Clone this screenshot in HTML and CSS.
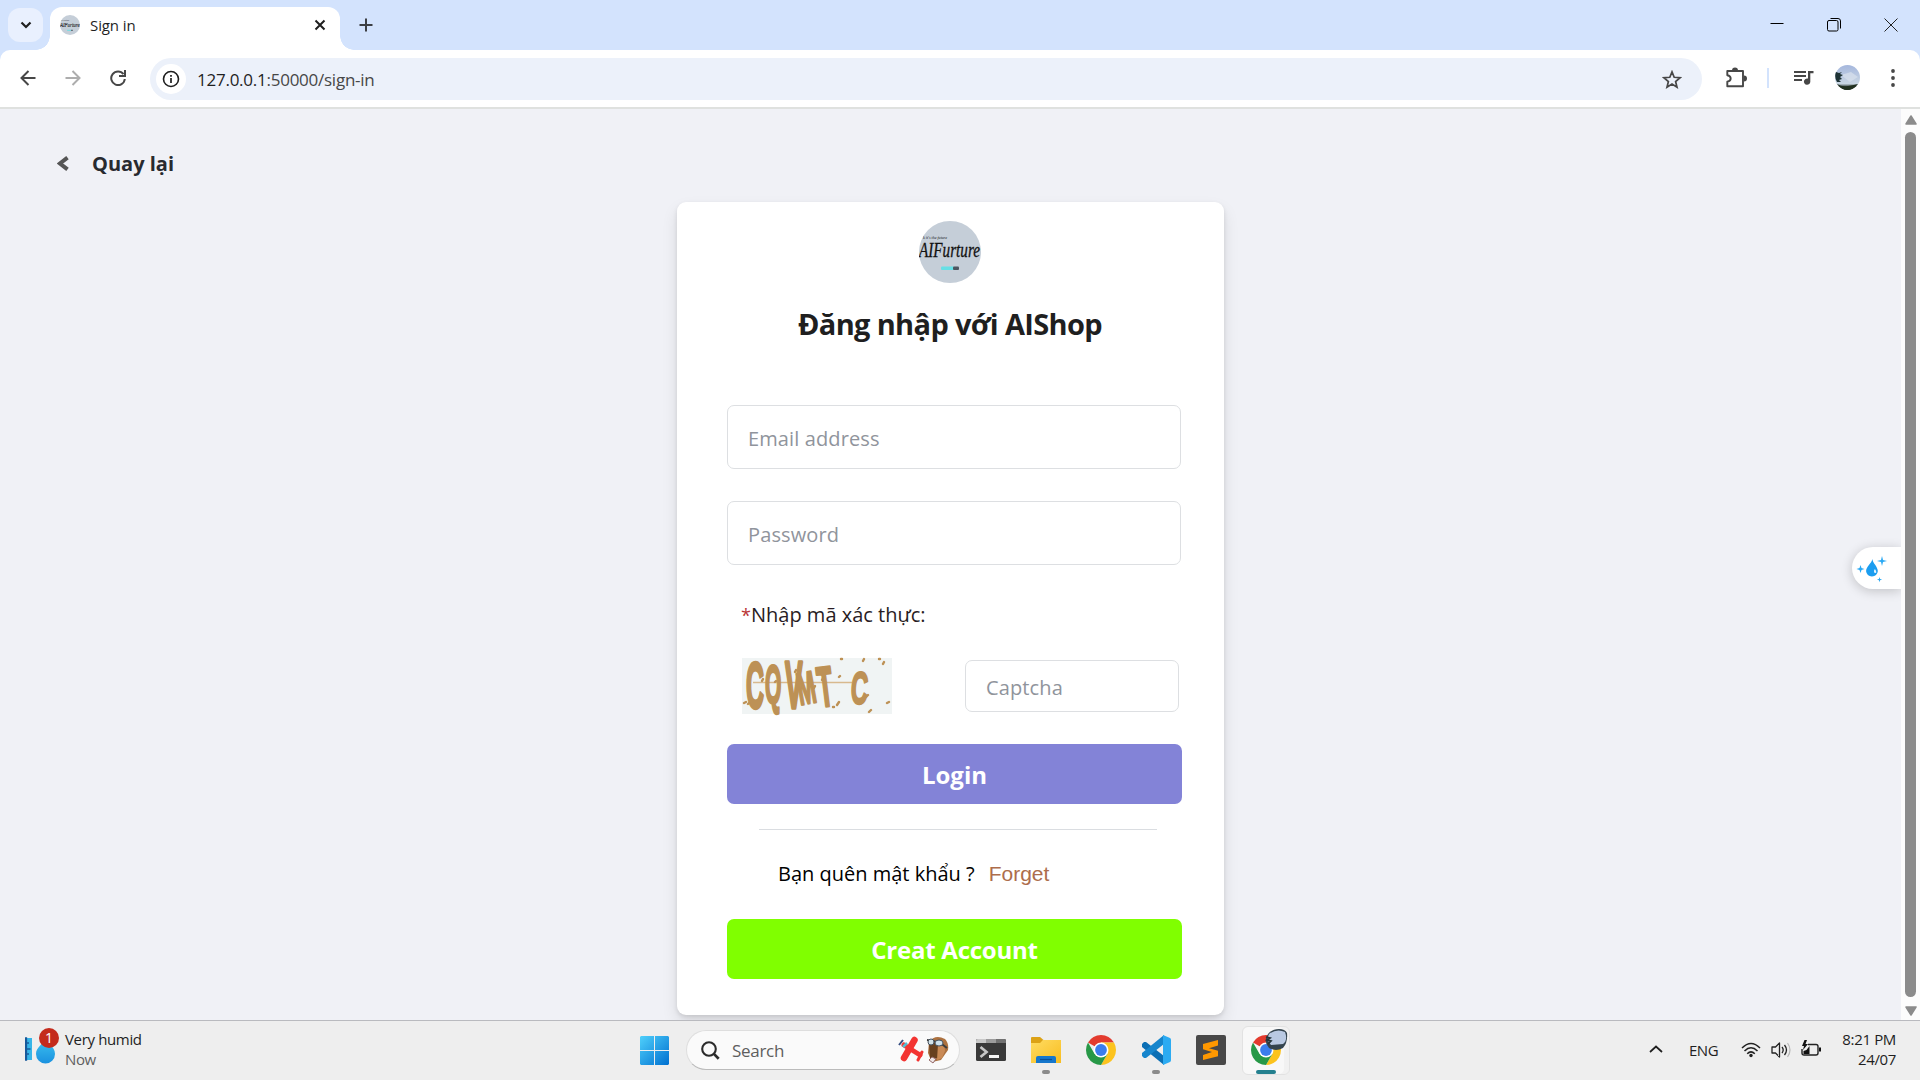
FILE: index.html
```html
<!DOCTYPE html>
<html lang="vi">
<head>
<meta charset="utf-8">
<title>Sign in</title>
<link rel="stylesheet" href="styles.css">
</head>
<body>
<svg class="defs" width="0" height="0">
  <defs>
    <symbol id="brand" viewBox="0 0 62 62">
      <circle cx="31" cy="31" r="31" fill="#c5ced8"/>
      <text x="4" y="18" class="brand-small" textLength="24" lengthAdjust="spacingAndGlyphs">k it's the future</text>
      <text x="0" y="36" class="brand-name" textLength="61" lengthAdjust="spacingAndGlyphs">AIFurture</text>
      <rect x="22" y="45.500" width="13" height="3.500" rx="1" fill="#67dfe5"/>
      <rect x="34" y="45.500" width="6" height="3.500" rx="1" fill="#4d5560"/>
    </symbol>
    <symbol id="chrome" viewBox="0 0 30 30">
      <path d="M15 15 2.010 7.500A15 15 0 0 1 27.990 7.500L15 7.500Z" fill="#e33b2e"/>
      <path d="M15 7.500H27.990A15 15 0 0 1 15 30L21.500 18.750Z" fill="#fcc31e"/>
      <path d="M2.010 7.500A15 15 0 0 0 15 30L21.500 18.750 15 15 8.500 18.750Z" fill="#279847"/>
      <circle cx="15" cy="15" r="7.500" fill="#fff"/>
      <circle cx="15" cy="15" r="5.900" fill="#3b7ded"/>
    </symbol>
    <linearGradient id="win" x1="0" y1="0" x2="1" y2="1"><stop offset="0" stop-color="#4fd0fb"/><stop offset="1" stop-color="#0070d0"/></linearGradient>
    <linearGradient id="drop" x1="0" y1="0" x2="0" y2="1"><stop offset="0" stop-color="#3fc4f0"/><stop offset="1" stop-color="#1a91df"/></linearGradient>
    <linearGradient id="folder" x1="0" y1="0" x2="1" y2="1"><stop offset="0" stop-color="#ffdc62"/><stop offset="1" stop-color="#f8bd20"/></linearGradient>
    <linearGradient id="sky" x1="0" y1="0" x2="0" y2="1"><stop offset="0" stop-color="#a5b7dd"/><stop offset=".75" stop-color="#c9d6e3"/><stop offset=".88" stop-color="#26332b"/></linearGradient>
  </defs>
</svg>

<header class="tabstrip">
  <div class="tab-search"><svg width="12" height="8" viewBox="0 0 12 8"><path d="M1.500 1.500 6 6l4.500-4.500" fill="none" stroke="#1f1f1f" stroke-width="2.200"/></svg></div>
  <div class="tab">
    <svg class="favicon" width="20" height="20"><use href="#brand"/></svg>
    <span class="tab-title">Sign in</span>
    <svg class="tab-close" width="12" height="12" viewBox="0 0 12 12"><path d="m1.500 1.500 9 9m0-9-9 9" stroke="#1f1f1f" stroke-width="2"/></svg>
  </div>
  <svg class="tab-new" width="14" height="14" viewBox="0 0 14 14"><path d="M7 .5v13M.5 7h13" stroke="#3c3f44" stroke-width="2"/></svg>
  <div class="window-buttons">
    <svg width="14" height="14" viewBox="0 0 14 14"><path d="M.5 5.500h13" stroke="#000"/></svg>
    <svg width="14" height="14" viewBox="0 0 14 14"><rect x=".5" y="2.500" width="10.500" height="10.500" rx="1.500" fill="none" stroke="#000"/><path d="M3.500.5h7.500a2.500 2.500 0 0 1 2.500 2.500v7.500" fill="none" stroke="#000"/></svg>
    <svg width="14" height="14" viewBox="0 0 14 14"><path d="m.5.5 13 13m0-13-13 13" stroke="#222"/></svg>
  </div>
</header>

<div class="toolbar-back">
<nav class="toolbar">
  <svg class="nav-back" width="16" height="16" viewBox="0 0 16 16"><path d="M15.500 8H2M8.500 1 1.500 8l7 7" fill="none" stroke="#474747" stroke-width="2"/></svg>
  <svg class="nav-forward" width="16" height="16" viewBox="0 0 16 16"><path d="M.5 8H14M7.500 1l7 7-7 7" fill="none" stroke="#adadad" stroke-width="2"/></svg>
  <svg class="nav-reload" width="16" height="16" viewBox="0 0 16 16"><path d="M13.500 4.200A6.800 6.800 0 1 0 14.800 9M15 0v6H9" fill="none" stroke="#474747" stroke-width="2"/></svg>
  <div class="omnibox">
    <div class="site-info"><svg width="18" height="18" viewBox="0 0 18 18"><circle cx="9" cy="9" r="7.500" fill="none" stroke="#1f1f1f" stroke-width="1.600"/><path d="M9 8v5M9 5v1.800" stroke="#1f1f1f" stroke-width="1.700"/></svg></div>
    <span class="url">127.0.0.1<span class="url-path">:50000/sign-in</span></span>
    <svg class="star" width="20" height="19" viewBox="0 0 20 19"><path d="m10 1.900 2.200 5.400 5.900.4-4.500 3.800 1.400 5.700-5-3.100-5 3.100 1.400-5.700L1.900 7.700l5.900-.4Z" fill="none" stroke="#474747" stroke-width="1.700"/></svg>
  </div>
  <svg class="puzzle" width="22" height="22" viewBox="0 0 22 22"><path d="M2.300 4h15.700v15.200H2.300v-4.500c4.500-1 4.500-5.400 0-6.400Z" fill="none" stroke="#474747" stroke-width="1.900" stroke-linejoin="round"/><path d="M7 3.500a3 3 0 0 1 6 0Zm12 5a3 3 0 0 1 0 6Z" fill="#474747"/></svg>
  <span class="separator"></span>
  <svg class="queue" width="20" height="16" viewBox="0 0 20 16"><path d="M0 2h12M0 6h12M0 10h8" stroke="#474747" stroke-width="2"/><path d="M14 1h5.500v2.300h-3.200v8.400A3.200 3.200 0 1 1 14 8.600Z" fill="#474747"/></svg>
  <svg class="avatar" width="25" height="25" viewBox="0 0 25 25"><circle cx="12.500" cy="12.500" r="12.500" fill="url(#sky)"/><path d="M6 10 16 7l7 5-8 5Z" fill="#d8e1ec" opacity=".7"/><path d="M1 7l3 1 3-1-2 2 3 1-3 2 2 2-3 1 2 2H2Q-1 12 1 7Z" fill="#1e3335"/><path d="M2 19Q7 22 13 21T23 19Q12 31 2 19Z" fill="#21301f"/></svg>
  <svg class="menu" width="4" height="18" viewBox="0 0 4 18"><g fill="#474747"><circle cx="2" cy="2" r="1.900"/><circle cx="2" cy="9" r="1.900"/><circle cx="2" cy="16" r="1.900"/></g></svg>
</nav>
</div>

<div class="viewport">
  <main class="page">
    <a class="back"><svg width="12" height="15" viewBox="0 0 12 15"><path d="M10.500 1.700 3 7.500l7.500 5.800" fill="none" stroke="#555" stroke-width="4"/></svg><span class="back-text">Quay lại</span></a>
    <section class="card">
      <svg class="logo" width="62" height="62"><use href="#brand"/></svg>
      <h1 class="title"><span>Đăng nhập với AIShop</span></h1>
      <form class="form">
        <div class="field field-email"><span>Email address</span></div>
        <div class="field field-password"><span>Password</span></div>
        <p class="captcha-label"><span class="required">*</span><span class="captcha-text">Nhập mã xác thực:</span></p>
        <div class="captcha-row">
          <svg class="captcha" width="150" height="56" viewBox="0 0 150 56">
            <rect width="150" height="56" fill="#f0f4f4"/>
            <path d="M11 24.500h99" stroke="#d8b98e" stroke-width="1.500"/>
            <g class="captcha-glyphs">
              <text transform="translate(4 50) scale(.64 1.640)">C</text>
              <text transform="translate(23 45) scale(.54 1.380)">Q</text>
              <text transform="translate(43 50) scale(.68 1.720)">V</text>
              <text transform="translate(58 47) rotate(-10) scale(.56 1.160)">M</text>
              <text transform="translate(78 49) rotate(-7) scale(.64 1.450)">T</text>
              <text transform="translate(108 45) rotate(4) scale(.6 1.160)">C</text>
            </g>
            <path d="m2 45 2-1m2 2 1-1m13-22 1-2m12 3 1-1m19-9 1-2m18 18 1-2m7-6 1-2m16-1 1-1m23-15 1-2m-23 0h1m37 0h1m3 5 1-2m-47 43 2-3m-6 5h1m32-10 2-2m19 8 2-1m-20 10 2-2" stroke="#bd9155" stroke-width="2.400" stroke-linecap="round"/>
          </svg>
          <div class="field field-captcha"><span>Captcha</span></div>
        </div>
        <div class="button login"><span>Login</span></div>
        <div class="rule"></div>
        <p class="forgot"><span class="forgot-text">Bạn quên mật khẩu ?</span><a class="forgot-link">Forget</a></p>
        <div class="button create"><span>Creat Account</span></div>
      </form>
    </section>
    <div class="assistant"><svg width="30" height="26" viewBox="0 0 30 26"><path d="M16.500 3c0 4 5.300 7.500 5.300 12.300a5.900 5.900 0 0 1-11.700 0C10.100 10.500 15.500 7.500 16.500 3Z" fill="#1b9df0"/><path d="M18.300 13.500q-1 3.500 1 3.500t0-3.500" fill="#e5f5ff"/><path d="m26 0 1 4 4 1-4 1-1 4-1-4-4-1 4-1ZM4.500 9l1 3 3 1-3 1-1 3-1-3-3-1 3-1ZM23.500 21l.6 2 2 .6-2 .6-.6 2-.6-2-2-.6 2-.6Z" fill="#2aa9f4"/></svg></div>
  </main>
  <div class="scrollbar">
    <svg width="12" height="10" viewBox="0 0 12 10"><path d="M6 1 11 9H1Z" fill="#8b8b8b" stroke="#8b8b8b" stroke-width="1.500" stroke-linejoin="round"/></svg>
    <div class="thumb"></div>
    <svg width="12" height="10" viewBox="0 0 12 10"><path d="M6 9 11 1H1Z" fill="#8b8b8b" stroke="#8b8b8b" stroke-width="1.500" stroke-linejoin="round"/></svg>
  </div>
</div>

<footer class="taskbar">
  <div class="weather">
    <svg width="36" height="38" viewBox="0 0 36 38"><path d="M0 11h7v22H0Z" fill="#36b5e8"/><path d="M0 11h1.500v22H0ZM1 16h3M1 22h4.500M1 27h3" stroke="#17599a" stroke-width="1.300" fill="#17599a"/><path d="M20 11c2 6 10 8 10 16a9.500 9.500 0 0 1-19 0c0-7 7-9 9-16Z" fill="url(#drop)"/><circle cx="24" cy="11" r="10" fill="#c42b1c"/><text x="24" y="16" text-anchor="middle" class="badge-num">1</text></svg>
    <div class="weather-text"><span class="weather-main">Very humid</span><span class="weather-sub">Now</span></div>
  </div>
  <div class="apps">
    <svg class="start" width="29" height="29" viewBox="0 0 29 29"><path d="M1 0h13v14H0V1Zm14 0h13l1 1v13H15ZM0 15h14v14H1l-1-1Zm15 0h14v13l-1 1H15Z" fill="url(#win)"/></svg>
    <div class="search">
      <svg width="19" height="19" viewBox="0 0 19 19"><circle cx="8" cy="8" r="6.800" fill="none" stroke="#2b2b2b" stroke-width="2.100"/><path d="m12.900 12.900 4.800 4.800" stroke="#2b2b2b" stroke-width="2.700"/></svg>
      <span class="search-text">Search</span>
      <svg class="plane" width="51" height="28" viewBox="0 0 51 28"><g stroke="#f33432" stroke-linecap="round"><path d="M16.500 4 6 22" stroke-width="6.500"/><path d="m6 9 16 10" stroke-width="5"/><path d="m24 16-4 8" stroke-width="3"/></g><path d="M1 9 5 4" stroke="#344c80" stroke-width="2"/><path d="m5 11 4-4" stroke="#54bed5" stroke-width="2.500"/><path d="M31 6q6-8 16-3 4 4 3 11l-7 10-9 2-4-9Z" fill="#ac713f"/><path d="M31 7h9v15h-8Z" fill="#67401f"/><path d="M40 8q7 0 7 7l-3 7-5 2Z" fill="#c98a56"/><path d="M29 4q12 1 20 8" stroke="#3d3d3d" stroke-width="2" fill="none"/><circle cx="33" cy="6" r="3" fill="#d2e2e8" stroke="#475360"/><ellipse cx="41" cy="7" rx="4" ry="3" fill="#cfe2ed" stroke="#475360"/><path d="m31 24 3-3 4 2-3 4Z" fill="#f0e8e8" stroke="#956a6a"/></svg>
    </div>
    <svg class="terminal" width="30" height="22" viewBox="0 0 30 22"><rect width="30" height="22" rx="1.500" fill="#393939"/><path d="M0 4V1.500Q0 0 1.500 0H10v4Z" fill="#c9c9c9"/><path d="M10 0h10v4H10Z" fill="#9c9c9c"/><path d="M20 0h8.500Q30 0 30 1.500V4H20Z" fill="#717171"/><path d="m4.500 8 6 5-6 5" fill="none" stroke="#c7c7c7" stroke-width="2.700"/><path d="M13 16h10v3H13Z" fill="#f5f5f5"/></svg>
    <div class="app explorer"><svg width="30" height="30" viewBox="0 0 30 30"><path d="M0 3q0-1 1-1h8l3.500 3-3.500 4H0Z" fill="#dca216"/><path d="M0 8h9l3-3h18v23H0Z" fill="url(#folder)"/><path d="M5 28v-5q0-2 2-2h16q2 0 2 2v5Z" fill="#1677cc"/><path d="M9 24.500h12" stroke="#0c4f96" stroke-width="1.200"/></svg><i class="dot"></i></div>
    <svg class="chrome" width="30" height="30"><use href="#chrome"/></svg>
    <div class="app code"><svg width="30" height="30" viewBox="0 0 30 30"><path d="m1 9 2-2h2l18 14v9L1 12Z" fill="#0b6fb5"/><path d="m1 21 2 2h2l18-14V0L1 18Z" fill="#1685cc"/><path d="m22 0 7 3q1 .5 1 2v20q0 1.500-1 2l-7 3Z" fill="#2cabf2"/></svg><i class="dot"></i></div>
    <svg class="sublime" width="30" height="30" viewBox="0 0 30 30"><rect width="30" height="30" rx="2" fill="#484848"/><path d="m7 9 15-4v5.500l-9 2.700 9 2.500v5.500L7 25v-5l9-3-9-2.700Z" fill="#ff9800"/></svg>
    <div class="active-app"><svg width="36" height="33" viewBox="0 0 36 33"><use href="#chrome" x="0" y="3" width="30" height="30"/><path d="M17 2q4-5 11-5 6 0 8 4 1 9-4 15-7 4-14 0-6-6-1-14Z" fill="#34444e"/><path d="M18 2q8-6 16-2 3 8-2 12l-12 1q-5-5-2-11Z" fill="#b9c9e2"/><path d="m15 5 4 1-3 2 4 1-3 3" stroke="#26363a" stroke-width="1.700" fill="none"/></svg><i class="indicator"></i></div>
  </div>
  <div class="tray">
    <svg class="chevron" width="14" height="8" viewBox="0 0 14 8"><path d="m1 7 6-5.500L13 7" fill="none" stroke="#1f1f1f" stroke-width="1.700"/></svg>
    <span class="lang">ENG</span>
    <svg class="wifi" width="20" height="16" viewBox="0 0 20 16"><g fill="none" stroke="#222" stroke-width="1.500"><path d="M1 6q9-9 18 0M3.500 9q6.500-6.500 13 0M6.200 11.700q3.800-3.700 7.600 0"/></g><circle cx="10" cy="13.500" r="1.700" fill="#222"/></svg>
    <svg class="sound" width="20" height="16" viewBox="0 0 20 16"><path d="M1 5h3.500L8.500 1v14l-4-4H1Z" fill="none" stroke="#222" stroke-width="1.300" stroke-linejoin="round"/><path d="M11 5q2.400 3 0 6M13.500 3q4 5 0 10" fill="none" stroke="#222" stroke-width="1.300"/><path d="M16.500 1q5 7 0 14" fill="none" stroke="#b8b8b8" stroke-width="1.200"/></svg>
    <svg class="battery" width="20" height="17" viewBox="0 0 20 17"><path d="M7 4.500h8q2 0 2 2V13q0 2-2 2H3q-2 0-2-2V9" fill="none" stroke="#222" stroke-width="1.400"/><path d="M18 7.500h2v4h-2ZM2.500 14v-3l3-1 3-4v8ZM3.500 0 1 6h2L2 10l5-6H4.500L6 0Z" fill="#111"/></svg>
    <div class="clock"><span class="time">8:21 PM</span><span class="date">24/07</span></div>
  </div>
</footer>
</body>
</html>
```
FILE: styles.css
```css
* { box-sizing: border-box; }
body {
  margin: 0;
  width: 1920px;
  height: 1080px;
  overflow: hidden;
  display: flex;
  flex-direction: column;
  font-family: "Open Sans", "Noto Sans", sans-serif;
  background: #f0f1f6;
}
svg { display: block; flex: none; }
.defs { position: absolute; }
span, a { white-space: nowrap; }
p, h1 { margin: 0; }
.brand-name { font: italic 20px "Liberation Serif", serif; fill: #111; stroke: #111; stroke-width: .3; }
.brand-small { font: italic 4px "Liberation Serif", serif; fill: #222; }

/* Tab strip */
.tabstrip { flex: none; display: flex; align-items: flex-start; height: 50px; background: #d3e3fd; }
.tab-search { display: flex; align-items: center; justify-content: center; width: 35px; height: 34px; margin: 8px 0 0 8px; border-radius: 12px; background: #e9f0fe; }
.tab { position: relative; display: flex; align-items: center; width: 290px; height: 43px; margin: 7px 0 0 7px; padding: 0 14px 7px 10px; border-radius: 12px 12px 0 0; background: #fff; }
.tab::before, .tab::after { content: ""; position: absolute; bottom: 0; width: 14px; height: 14px; }
.tab::before { left: -14px; background: radial-gradient(circle at 0 0, transparent 13.500px, #fff 14px); }
.tab::after { right: -14px; background: radial-gradient(circle at 100% 0, transparent 13.500px, #fff 14px); }
.tab-title { margin-left: 10px; font-size: 15px; line-height: 20px; letter-spacing: -.1px; color: #1f1f1f; }
.tab-close { margin-left: auto; }
.tab-new { margin: 18px 0 0 19px; }
.window-buttons { display: flex; gap: 43px; margin: 18px 22px 0 auto; }

/* Toolbar */
.toolbar-back { flex: none; background: #d3e3fd; }
.toolbar { display: flex; align-items: center; height: 59px; padding: 0 24px 2px 20px; border-bottom: 2px solid #dfe1df; border-radius: 10px 10px 0 0; background: #fff; }
.nav-forward { margin-left: 29px; }
.nav-reload { margin-left: 29px; }
.omnibox { flex: none; display: flex; align-items: center; width: 1552px; height: 42px; margin: 3px 0 0 24px; padding: 0 20px 0 6px; border-radius: 21px; background: #ecf1fa; }
.site-info { display: flex; align-items: center; justify-content: center; width: 30px; height: 30px; border-radius: 50%; background: #fff; }
.url { margin: 2px 0 0 11px; font-size: 17px; line-height: 24px; letter-spacing: -.25px; color: #1f1f1f; }
.url-path { color: #474747; }
.star { margin-left: auto; }
.puzzle { margin-left: 23px; }
.separator { width: 2px; height: 20px; margin-left: 20px; background: #d3e3fd; }
.queue { margin-left: 25px; }
.avatar { margin-left: 21px; }
.menu { margin-left: 31px; }

/* Page */
.viewport { display: flex; height: 911px; }
.page { position: relative; width: 1901px; overflow: hidden; background: #f0f1f6; }
.back { display: flex; align-items: center; height: 30px; margin: 39px 0 0 57px; }
.back-text { margin: 1px 0 0 23px; font-size: 20px; font-weight: 700; line-height: 30px; letter-spacing: 0; color: #282a2f; }
.card { display: flex; flex-direction: column; width: 547px; height: 813px; margin: 24px 0 0 677px; padding: 19px 42px 0 50px; border-radius: 9px; background: #fff; box-shadow: 0 2px 4px rgba(0,0,0,.1), 0 8px 16px rgba(0,0,0,.1); }
.logo { margin-left: 192px; }
.title { height: 42px; margin: 20px 0 1px 71px; font-size: 29px; font-weight: 700; line-height: 42px; letter-spacing: -.65px; color: #1f1f1f; }
.form { display: flex; flex-direction: column; padding-top: 59px; }
.field { display: flex; align-items: center; width: 454px; height: 64px; padding: 2px 20px 0; border: 1px solid #dddfe2; border-radius: 7px; font-size: 20px; letter-spacing: .12px; color: #90949c; }
.field-password { margin-top: 32px; }
.captcha-label { display: flex; height: 30px; margin: 35px 0 0 15px; font-size: 20px; line-height: 30px; }
.required { width: 9px; margin-left: -1px; margin-right: 1px; color: #b93535; font-size: 18px; }
.captcha-text { color: #281c24; }
.captcha-row { display: flex; height: 56px; margin: 28px 0 0 15px; }
.captcha { overflow: visible; }
.captcha-glyphs { font: bold 39px "Liberation Sans", sans-serif; fill: #bd9155; stroke: #bd9155; stroke-width: 2px; stroke-linejoin: round; }
.field-captcha { width: 214px; height: 52px; margin: 2px 0 0 73px; }
.button { display: flex; align-items: center; justify-content: center; width: 455px; height: 60px; border-radius: 7px; font-size: 24px; font-weight: 700; color: #fff; }
.login { margin-top: 30px; background: #8383d7; }
.rule { width: 398px; height: 1px; margin: 25px 0 0 32px; background: #dadde1; }
.forgot { display: flex; height: 30px; margin: 29px 0 0 51px; font-size: 20px; line-height: 30px; color: #000; }
.forgot-link { margin-left: 14px; font-family: "Liberation Sans", sans-serif; font-size: 21px; color: #ad6d4c; }
.create { margin-top: 30px; letter-spacing: -.25px; background: #80ff00; }
.assistant { position: absolute; right: 0; top: 438px; width: 49px; height: 42px; padding: 9px 0 0 4px; border-radius: 21px 0 0 21px; background: #fff; box-shadow: 0 2px 12px rgba(0,0,0,.2); }
.assistant svg { overflow: visible; }
.scrollbar { display: flex; flex-direction: column; align-items: center; width: 19px; padding: 6px 0 4px; background: #fcfcfc; }
.thumb { width: 11px; height: 866px; margin: 7px 0 9px; border-radius: 6px; background: #8b8b8b; }

/* Taskbar */
.taskbar { flex: none; display: flex; align-items: flex-start; height: 60px; border-top: 1px solid #b9babf; background: #eee; }
.weather { flex: none; display: flex; width: 639px; padding: 6px 0 0 25px; }
.badge-num { font: 14px "Open Sans", sans-serif; fill: #fff; }
.weather-text { display: flex; flex-direction: column; margin: 2px 0 0 4px; font-size: 15px; line-height: 20px; letter-spacing: -.35px; color: #1f1f1f; }
.weather-sub { color: #5f5f5f; }
.apps { flex: none; display: flex; align-items: flex-start; width: 651px; }
.start { margin: 15px 0 0 1px; }
.search { flex: none; display: flex; align-items: center; width: 274px; height: 40px; margin: 9px 0 0 17px; padding: 0 10px 0 14px; border: 1px solid #dedede; border-bottom-color: #bbb; border-radius: 20px; background: #fafafa; }
.search-text { margin: 1px 0 0 12px; font-size: 17px; line-height: 24px; letter-spacing: -.3px; color: #5e5e5e; }
.plane { margin-left: auto; }
.terminal { margin: 18px 0 0 16px; }
.app { display: flex; flex-direction: column; align-items: center; margin: 14px 0 0 25px; }
.dot { width: 8px; height: 4px; margin-top: 5px; border-radius: 2px; background: #8a8a8a; }
.chrome, .sublime { margin: 14px 0 0 25px; }
.active-app { display: flex; flex-direction: column; width: 48px; height: 49px; margin: 5px 0 0 16px; padding: 5px 0 0 8px; border: 1px solid #e2e2e2; border-radius: 6px; background: #f8f8f8; box-shadow: inset -5px 0 #f1f1f1; }
.active-app svg { overflow: visible; }
.active-app .indicator { width: 20px; height: 4px; margin: 5px 0 0 5px; border-radius: 2px; background: #24808f; }
.tray { display: flex; align-items: flex-start; flex: 1; padding-left: 359px; }
.chevron { margin-top: 24px; }
.lang { width: 29px; margin: 19px 0 0 26px; font-size: 15px; line-height: 20px; letter-spacing: -.5px; color: #1f1f1f; }
.wifi { margin: 21px 0 0 23px; }
.sound { margin: 21px 0 0 10px; }
.battery { margin: 19px 0 0 10px; }
.clock { display: flex; flex-direction: column; align-items: flex-end; flex: 1; margin: 8px 24px 0 0; font-size: 15px; line-height: 20px; letter-spacing: -.35px; color: #1f1f1f; }
```
